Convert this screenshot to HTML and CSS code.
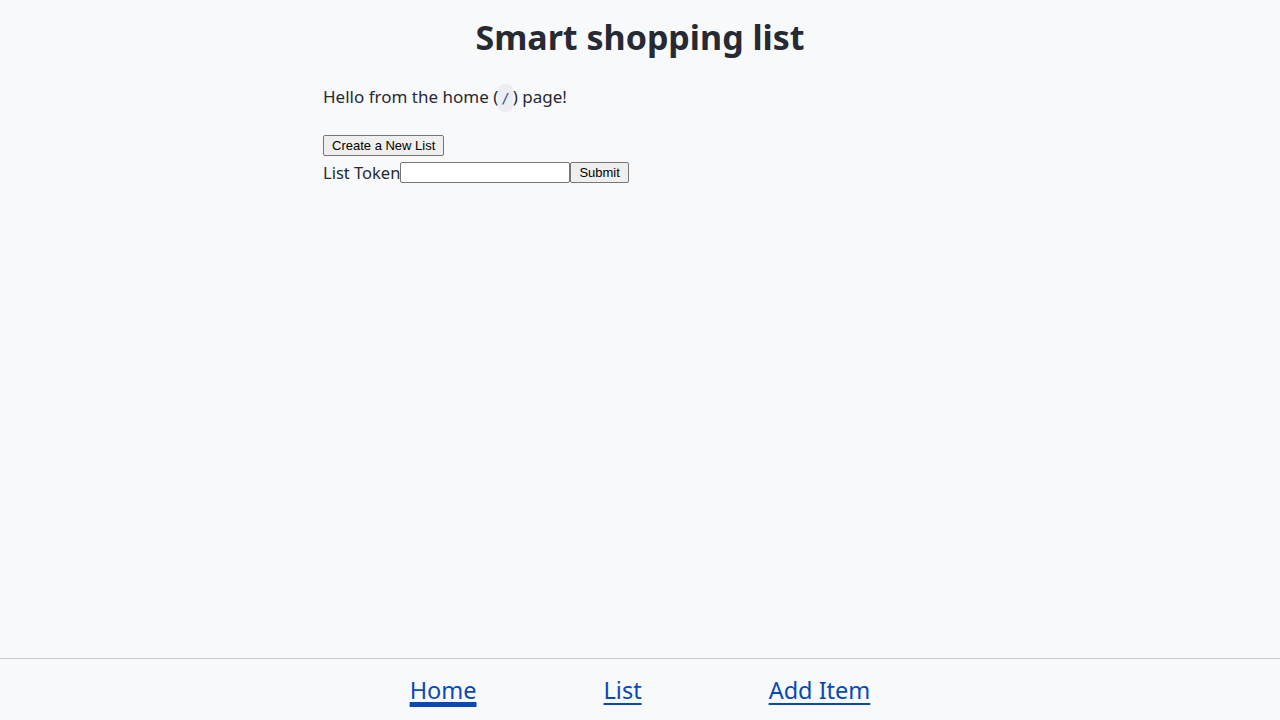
FILE: index.html
```html
<!DOCTYPE html>
<html lang="en">
<head>
<meta charset="utf-8">
<title>Smart shopping list</title>
<link rel="stylesheet" href="styles.css">
</head>
<body>
<div class="app">
  <main class="main">
    <h1 class="title">Smart shopping list</h1>
    <div class="content">
      <p class="hello">Hello from the home (<code class="code">/</code>) page!</p>
      <div class="actions">
        <button class="btn" type="button">Create a New List</button>
        <form class="token-form">
          <label class="label" for="token">List Token</label><input class="input" id="token" type="text"><button class="btn" type="submit">Submit</button>
        </form>
      </div>
    </div>
  </main>
  <footer class="footer">
    <nav class="nav">
      <a class="nav-link active" href="#">Home</a>
      <a class="nav-link" href="#">List</a>
      <a class="nav-link" href="#">Add Item</a>
    </nav>
  </footer>
</div>
</body>
</html>
```

FILE: styles.css
```css
* { box-sizing: border-box; }
html, body { margin: 0; padding: 0; }
body {
  background: #f8f9fb;
  color: #262a33;
  font-family: "Noto Sans", "Open Sans", sans-serif;
  font-size: 17px;
}
.app {
  min-height: 100vh;
  height: 720px;
  display: flex;
  flex-direction: column;
}
.main {
  flex: 1;
}
.title {
  margin: 14px 0 0;
  text-align: center;
  font-size: 34px;
  font-weight: 700;
  line-height: 46px;
}
.content {
  width: 634px;
  margin: 0 auto;
}
.hello {
  margin: 23px 0 0;
  line-height: 28px;
}
.code {
  font-family: "DejaVu Sans Mono", monospace;
  font-size: 14px;
  color: #2d4f94;
  background: #eceef3;
  border-radius: 6px;
  padding: 6px 3px;
}
.actions {
  margin-top: 20px;
}
.btn {
  font-family: Arial, "Liberation Sans", sans-serif;
  font-size: 13px;
  color: #000;
  background: #efefef;
  border: 1px solid #767676;
  border-radius: 2px;
  padding: 1px 8px;
  height: 21px;
  line-height: 17px;
}
.token-form {
  display: flex;
  align-items: center;
  margin-top: 5px;
  height: 22px;
}
.label {
  font-size: 16.5px;
}
.input {
  width: 170px;
  height: 21px;
  border: 1px solid #767676;
  border-radius: 2px;
  background: #fff;
}
.footer {
  border-top: 1px solid #c6c9d3;
  height: 62px;
  display: flex;
  justify-content: center;
  align-items: center;
}
.nav {
  display: flex;
  gap: 127px;
}
.nav-link {
  font-size: 23.5px;
  color: #0a49b5;
  text-decoration: underline;
  text-decoration-thickness: 1.5px;
  text-underline-offset: 4px;
}
.nav-link.active {
  text-decoration-thickness: 5px;
  text-underline-offset: 3px;
}
```
